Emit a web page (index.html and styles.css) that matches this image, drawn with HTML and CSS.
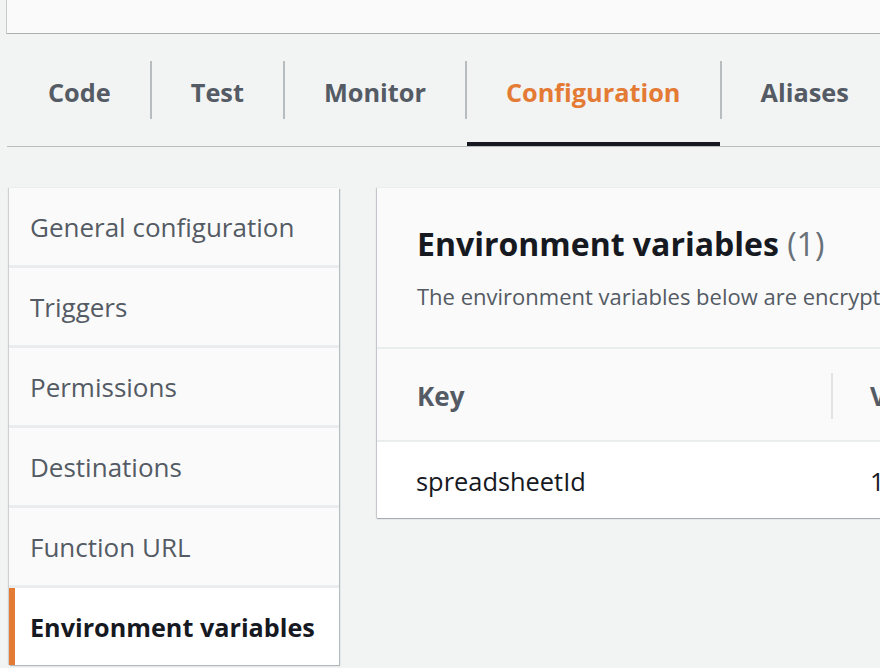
FILE: index.html
```html
<!DOCTYPE html>
<html lang="en">
<head>
<meta charset="utf-8">
<title>Configuration</title>
<link rel="stylesheet" href="styles.css">
</head>
<body>
<div class="topcard"></div>
<nav class="tabs">
  <div class="tab">Code</div>
  <div class="sep"></div>
  <div class="tab">Test</div>
  <div class="sep"></div>
  <div class="tab">Monitor</div>
  <div class="sep"></div>
  <div class="tab active">Configuration</div>
  <div class="sep"></div>
  <div class="tab">Aliases</div>
</nav>
<div class="content">
  <ul class="sidenav">
    <li class="item">General configuration</li>
    <li class="item">Triggers</li>
    <li class="item">Permissions</li>
    <li class="item">Destinations</li>
    <li class="item">Function URL</li>
    <li class="item current">Environment variables</li>
  </ul>
  <section class="panel">
    <header class="panel-head">
      <h2 class="title">Environment variables <span class="count">(1)</span></h2>
      <p class="desc">The environment variables below are encrypted at rest with the default Lambda service key.</p>
    </header>
    <div class="thead">
      <div class="th key">Key</div>
      <div class="th val"><span class="colsep"></span>Value</div>
    </div>
    <div class="trow">
      <div class="td key">spreadsheetId</div>
      <div class="td val">1</div>
    </div>
  </section>
</div>
</body>
</html>
```
FILE: styles.css
```css
html, body {
  margin: 0;
  padding: 0;
}
body {
  width: 880px;
  height: 668px;
  overflow: hidden;
  background: #f2f3f3;
  font-family: "Open Sans", "Noto Sans", sans-serif;
  color: #545b64;
}
.topcard {
  margin-left: 7px;
  height: 33px;
  background: #fafafa;
  border-bottom: 1px solid #a9b0b2;
  box-shadow: -1px 0 0 #c6cbcd;
}
.tabs {
  display: flex;
  align-items: center;
  margin-left: 7px;
  height: 112px;
  border-bottom: 1px solid #b7bdbf;
  white-space: nowrap;
}
.tab {
  align-self: stretch;
  display: flex;
  align-items: center;
  padding: 7px 39px 0;
  font-size: 25.3px;
  font-weight: 700;
  color: #545b64;
  border-bottom: 4px solid transparent;
}
.tab:first-child {
  padding-left: 41px;
}
.tab.active {
  color: #e47b35;
  border-bottom-color: #16191f;
}
.sep {
  flex: none;
  width: 2px;
  height: 58px;
  background: #b7bdbf;
}
.content {
  display: flex;
  align-items: flex-start;
  gap: 38px;
  padding: 41px 0 0 9px;
}
.sidenav {
  list-style: none;
  margin: 0;
  padding: 0;
  width: 330px;
  flex: none;
  display: flex;
  flex-direction: column;
  gap: 3px;
  background: #eaeded;
  box-shadow: 1px 1px 1px rgba(0,22,40,0.25), -1px 0 1px rgba(0,22,40,0.15);
}
.item {
  height: 77px;
  display: flex;
  align-items: center;
  padding-left: 21px;
  background: #fafafa;
  font-size: 26px;
  color: #545b64;
  white-space: nowrap;
}
.item.current {
  background: #fff;
  border-left: 6px solid #e47b35;
  padding-left: 15px;
  font-size: 25.2px;
  font-weight: 700;
  color: #16191f;
}
.panel {
  flex: none;
  width: 700px;
  background: #fafafa;
  box-shadow: 0 1px 1px rgba(0,22,40,0.3), -1px 0 1px rgba(0,22,40,0.15);
}
.panel-head {
  height: 161px;
  box-sizing: border-box;
  padding: 36px 40px 0;
  border-bottom: 2px solid #eaeded;
  white-space: nowrap;
}
.title {
  margin: 0;
  font-size: 32px;
  font-weight: 700;
  color: #16191f;
  line-height: 40px;
}
.count {
  font-weight: 400;
  color: #687078;
}
.desc {
  margin: 17px 0 0;
  font-size: 22px;
  color: #545b64;
  line-height: 30px;
}
.thead {
  display: flex;
  height: 91px;
  align-items: center;
  border-bottom: 2px solid #eaeded;
}
.th {
  font-size: 26px;
  font-weight: 700;
  color: #545b64;
  padding-top: 2px;
}
.key {
  width: 454px;
  flex: none;
  box-sizing: border-box;
  padding-left: 40px;
}
.th.val {
  display: flex;
  align-items: center;
  gap: 37px;
}
.colsep {
  width: 2px;
  height: 46px;
  background: #dfe3e3;
}
.trow {
  display: flex;
  height: 76px;
  align-items: center;
  background: #fff;
}
.td {
  font-size: 25.4px;
  color: #16191f;
  padding-top: 2px;
}
.td.key {
  padding-left: 39px;
}
.td.val {
  padding-left: 39px;
}
```
